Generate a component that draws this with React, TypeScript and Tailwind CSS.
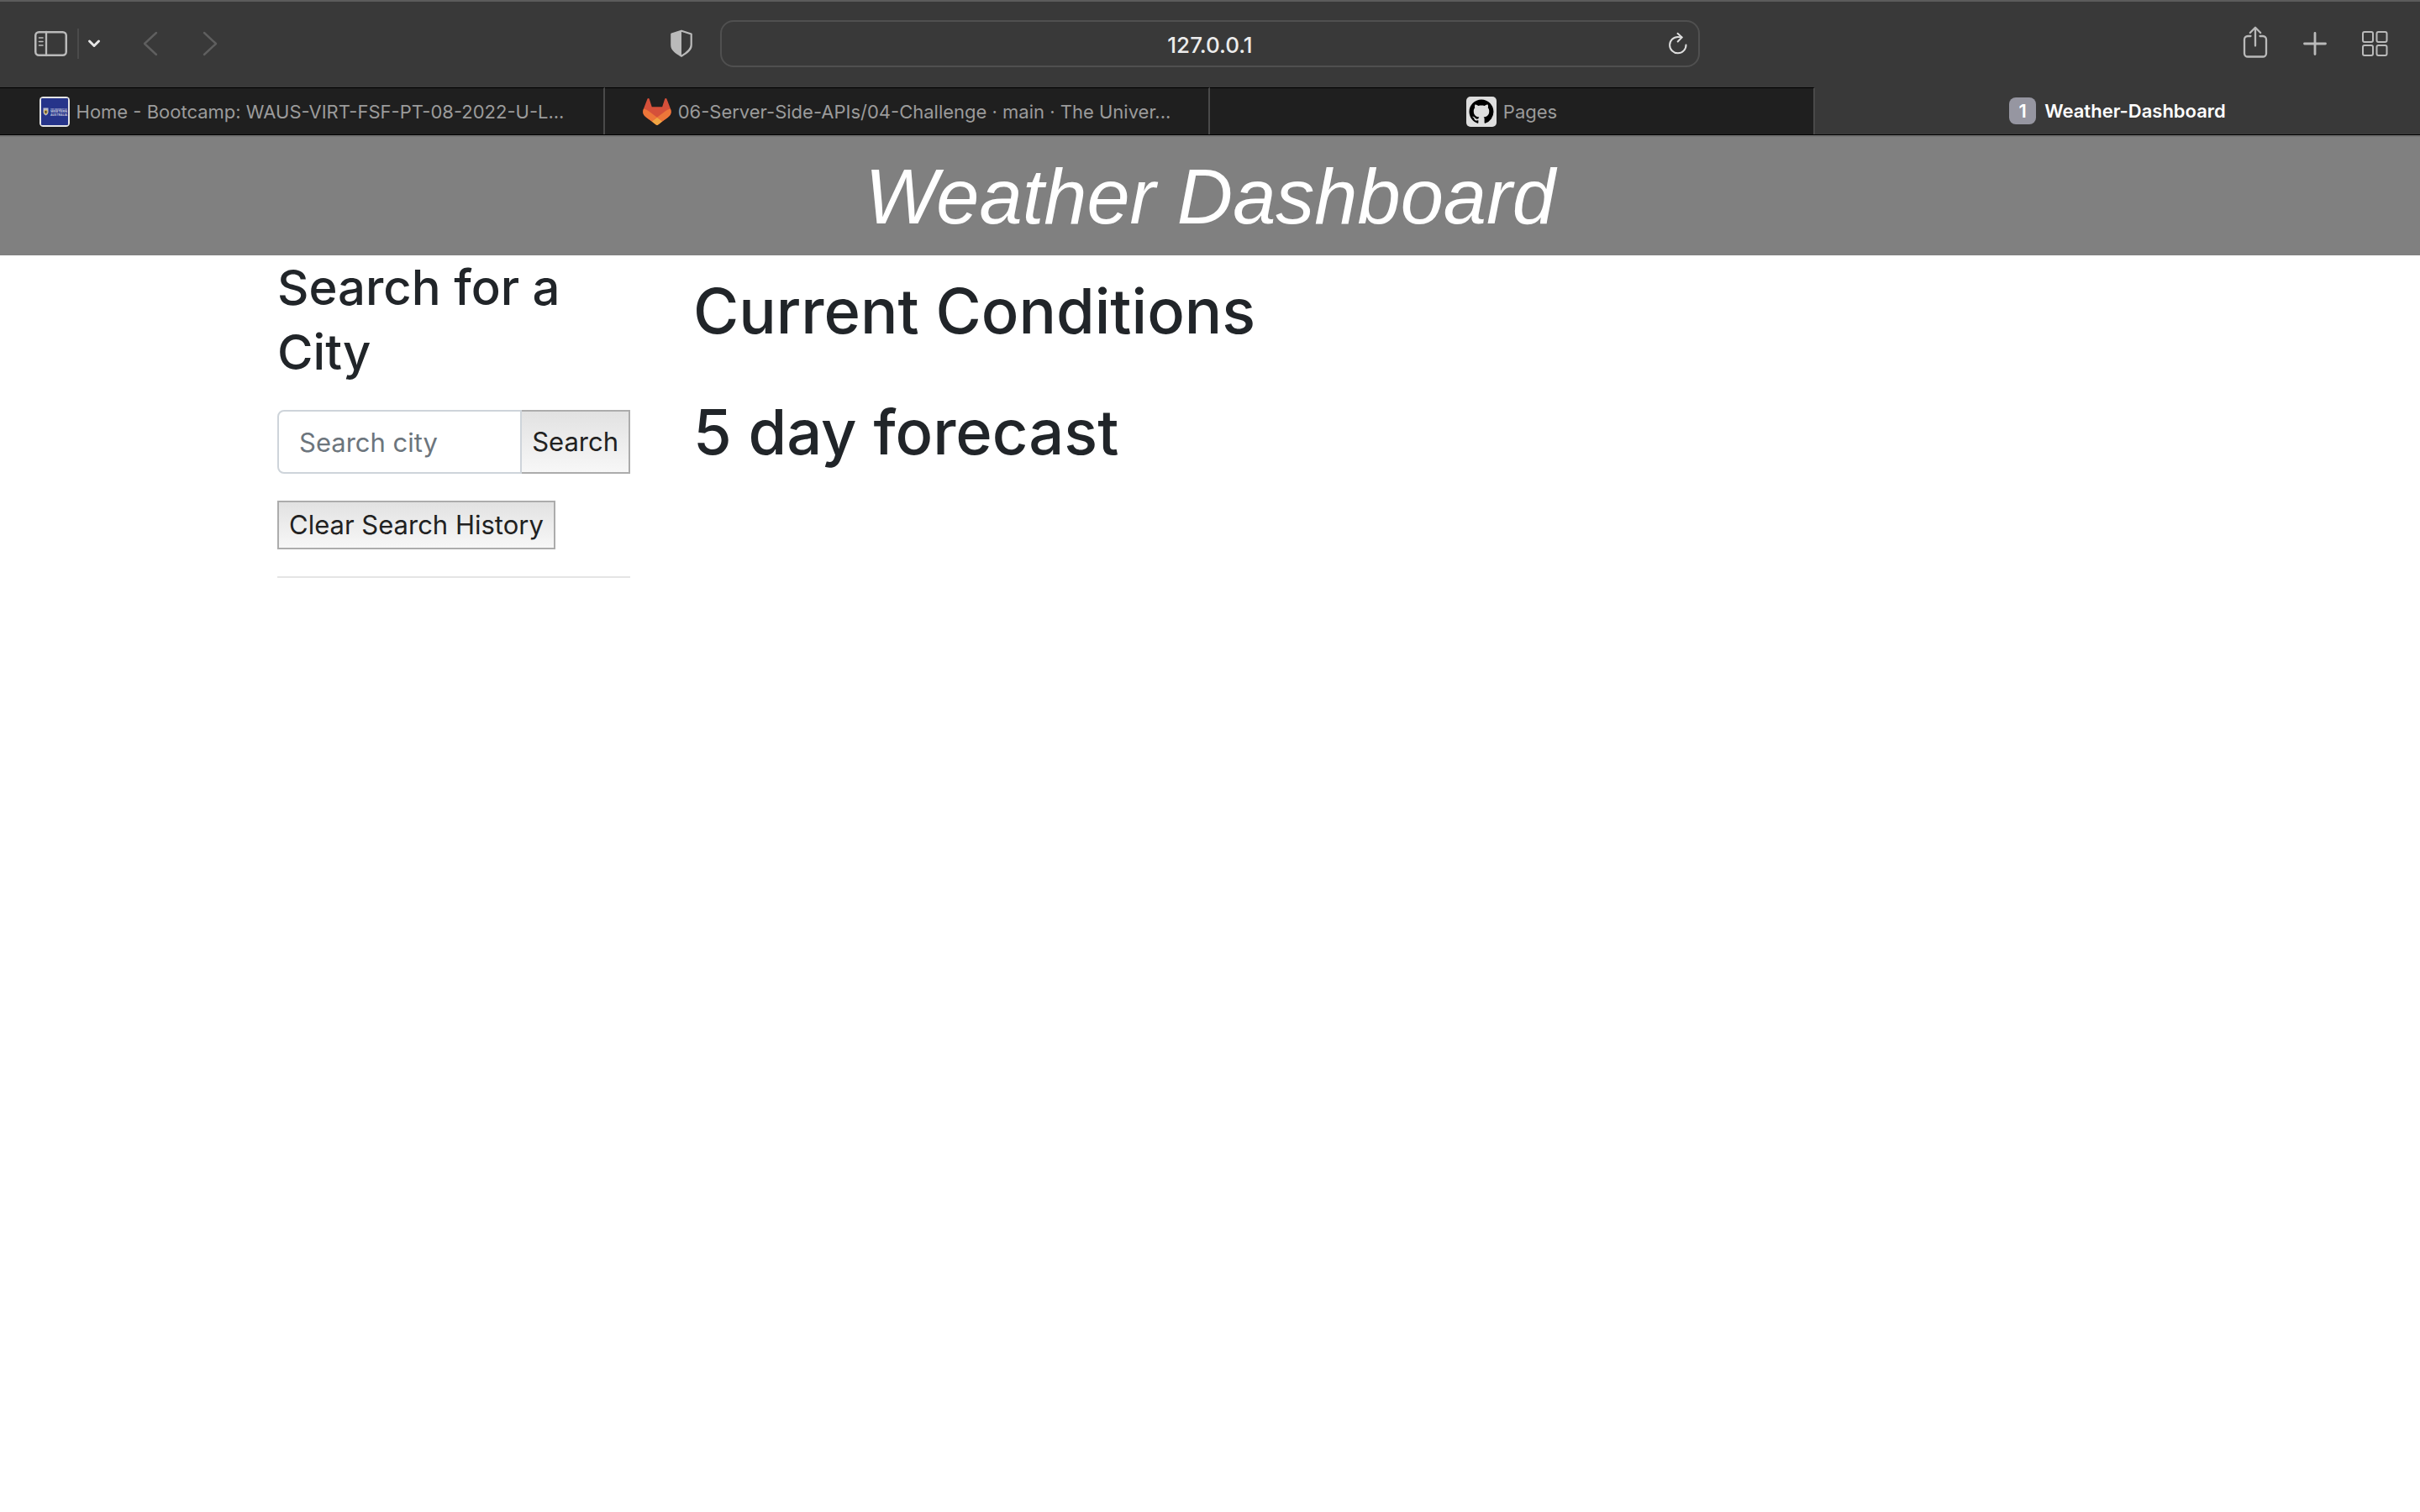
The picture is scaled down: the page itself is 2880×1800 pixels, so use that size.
import type { ReactNode } from "react";

const gradientButton =
  "border-2 border-[#acacac] bg-linear-to-b from-[#e2e2e2] to-[#f7f7f7] px-3 text-[31px] leading-[54px] text-[#212121]";

const sectionHeading = "text-[74px] leading-24 font-medium";

function SidebarIcon() {
  return (
    <svg width="40" height="32" viewBox="0 0 40 32" fill="none" stroke="#bababa" strokeLinecap="round">
      <rect x="2.25" y="2.25" width="36.5" height="27.5" rx="4" strokeWidth="2.5" />
      <path d="M15 2v28" strokeWidth="2.3" />
      <path d="M6.5 9h4.5M6.5 13.5h4.5M6.5 18h4.5" strokeWidth="1.6" />
    </svg>
  );
}

function SmallChevronIcon() {
  return (
    <svg width="16" height="12" viewBox="0 0 16 12" fill="none" stroke="#e6e6e6" strokeWidth="3" strokeLinecap="round" strokeLinejoin="round">
      <path d="M2.5 3 8 8.5 13.500 3" />
    </svg>
  );
}

function ArrowIcon({ forward = false }: { forward?: boolean }) {
  return (
    <svg width="18" height="30" viewBox="0 0 18 30" fill="none" stroke="#5f5f5f" strokeWidth="2.4" strokeLinecap="round" strokeLinejoin="round">
      <path d={forward ? "M2 2l14 13L2 28" : "M16 2 2 15l14 13"} />
    </svg>
  );
}

function ShieldIcon() {
  return (
    <svg width="28" height="34" viewBox="0 0 28 34">
      <path
        d="M14 1.700 25.700 5.500v13c0 5.500-4.500 9-11.700 13.200C6.800 27.500 2.300 24 2.300 18.500v-13z"
        fill="none"
        stroke="#bababa"
        strokeWidth="2.200"
        strokeLinejoin="round"
      />
      <path d="M14 1.500 2.300 5.500v13c0 5.500 4.500 9 11.700 13.200z" fill="#bababa" />
    </svg>
  );
}

function ReloadIcon() {
  return (
    <svg width="24" height="28" viewBox="0 0 24 28" fill="none" stroke="#dedede" strokeWidth="2" strokeLinecap="round" strokeLinejoin="round">
      <path d="M21.500 15.500A9.700 9.700 0 1 1 11.800 5.900c1.500 0 3 .1 4.700.500" />
      <path d="M11.500 1.800 16.700 6.400 11.700 11.500" />
    </svg>
  );
}

function ShareIcon() {
  return (
    <svg width="30" height="38" viewBox="0 0 30 38" fill="none" stroke="#bababa" strokeWidth="2.300" strokeLinecap="round" strokeLinejoin="round">
      <path d="M9.500 12H6a4 4 0 0 0-4 4v16.500a4 4 0 0 0 4 4h18a4 4 0 0 0 4-4V16a4 4 0 0 0-4-4h-3.500" />
      <path d="M15 23.500V2M8.800 8 15 1.800 21.200 8" />
    </svg>
  );
}

function PlusIcon() {
  return (
    <svg width="28" height="28" viewBox="0 0 28 28" stroke="#bababa" strokeWidth="2.800" strokeLinecap="round">
      <path d="M14 1.500v25M1.500 14h25" />
    </svg>
  );
}

function GridIcon() {
  return (
    <svg width="31" height="30" viewBox="0 0 31 30" fill="none" stroke="#bababa" strokeWidth="2">
      <rect x="1" y="1" width="12" height="12" rx="2" />
      <rect x="17.500" y="1" width="12" height="12" rx="2" />
      <rect x="1" y="17" width="12" height="12" rx="2" />
      <rect x="17.500" y="17" width="12" height="12" rx="2" />
    </svg>
  );
}

function UniversityFavicon() {
  return (
    <svg width="36" height="36" viewBox="0 0 36 36" className="shrink-0">
      <rect width="36" height="36" rx="4.500" fill="#e4e4e4" />
      <rect x="2" y="2" width="32" height="32" rx="1" fill="#26348a" />
      <path d="M4.500 13.500h6v5c0 2-1.500 3-3 4-1.500-1-3-2-3-4z" fill="#b9bccb" />
      <path d="M5.500 17 7.500 15.500 9.500 17v2L7.500 21.200 5.500 19z" fill="#caa33a" />
      <path d="M6.800 17.200h1.500v2.200H6.800z" fill="#1d2340" />
      <g fill="#c3c6dc" fontFamily="Inter, sans-serif" fontWeight="700">
        <text x="13" y="15.500" fontSize="2">THE UNIVERSITY OF</text>
        <text x="13" y="19.200" fontSize="4">WESTERN</text>
        <text x="13" y="22.800" fontSize="3.500">AUSTRALIA</text>
      </g>
    </svg>
  );
}

function GitlabFavicon() {
  return (
    <svg width="34" height="32" viewBox="0 0 25 24" className="shrink-0">
      <path
        fill="#d5503a"
        d="M24.507 9.500l-.034-.09L21.082.562a.896.896 0 0 0-1.694.091l-2.290 7.010H7.825L5.535.653a.898.898 0 0 0-1.694-.090L.451 9.411.416 9.500a6.297 6.297 0 0 0 2.090 7.278l.012.010.030.022 5.160 3.867 2.560 1.935 1.554 1.176a1.051 1.051 0 0 0 1.268 0l1.555-1.176 2.560-1.935 5.197-3.890.014-.010A6.297 6.297 0 0 0 24.507 9.500z"
      />
      <path
        fill="#ed7639"
        d="M24.507 9.500l-.034-.090a11.440 11.440 0 0 0-4.560 2.051l-7.447 5.632 4.742 3.584 5.197-3.890.014-.010A6.297 6.297 0 0 0 24.507 9.500z"
      />
      <path
        fill="#f0a542"
        d="M7.707 20.677l2.560 1.935 1.555 1.176a1.051 1.051 0 0 0 1.268 0l1.555-1.176 2.560-1.935-4.743-3.584-4.755 3.584z"
      />
      <path
        fill="#ed7639"
        d="M5.010 11.461a11.430 11.430 0 0 0-4.560-2.050L.416 9.500a6.297 6.297 0 0 0 2.090 7.278l.012.010.030.022 5.160 3.867 4.745-3.584-7.444-5.632z"
      />
    </svg>
  );
}

function GithubFavicon() {
  return (
    <svg width="36" height="36" viewBox="0 0 36 36" className="shrink-0">
      <rect width="36" height="36" rx="5" fill="#dedede" />
      <g transform="translate(3.500 3.500) scale(1.810)">
        <path
          fill="#000"
          d="M8 0C3.580 0 0 3.580 0 8c0 3.540 2.290 6.530 5.470 7.590.4.070.55-.17.55-.38 0-.19-.010-.82-.010-1.490-2.010.37-2.530-.49-2.690-.94-.090-.23-.48-.94-.82-1.130-.28-.15-.68-.52-.010-.53.63-.010 1.080.58 1.230.82.72 1.210 1.870.87 2.330.66.070-.52.28-.87.51-1.070-1.780-.2-3.640-.89-3.640-3.950 0-.87.31-1.590.82-2.150-.080-.2-.36-1.020.080-2.120 0 0 .67-.21 2.200.82.64-.18 1.320-.27 2-.27s1.360.090 2 .27c1.530-1.040 2.200-.82 2.200-.82.44 1.100.16 1.920.080 2.120.51.56.82 1.270.82 2.150 0 3.070-1.870 3.750-3.650 3.950.29.25.54.73.54 1.480 0 1.070-.010 1.930-.010 2.200 0 .21.15.46.55.38A8.010 8.010 0 0 0 16 8c0-4.420-3.580-8-8-8z"
        />
      </g>
    </svg>
  );
}

function Tab({ icon, title, active = false }: { icon: ReactNode; title: string; active?: boolean }) {
  return (
    <button
      type="button"
      role="tab"
      aria-selected={active}
      className={
        active
          ? "flex min-w-0 items-center justify-center gap-2.5 bg-[#393939] px-9 font-semibold text-white"
          : "flex min-w-0 items-center justify-center gap-2 border-t border-r-2 border-t-black border-r-[#4a4a4a] bg-[#1f1f1f] px-9 text-[#9b9b9b]"
      }
    >
      {icon}
      <span className="truncate">{title}</span>
    </button>
  );
}

function BrowserChrome() {
  return (
    <div className="border-t-2 border-[#5c5c5c] bg-[#393939]">
      <div className="grid h-[102px] grid-cols-[1fr_40.5%_1fr] items-center pb-0.5">
        <div className="flex items-center pr-8 pl-10">
          <button type="button" aria-label="Show sidebar">
            <SidebarIcon />
          </button>
          <div className="mr-2.5 ml-3 h-9 w-0.5 bg-[#4b4b4b]" />
          <button type="button" aria-label="Tab groups">
            <SmallChevronIcon />
          </button>
          <button type="button" aria-label="Back" className="ml-[50px]">
            <ArrowIcon />
          </button>
          <button type="button" aria-label="Forward" className="ml-[53px]">
            <ArrowIcon forward />
          </button>
          <button type="button" aria-label="Privacy report" className="ml-auto">
            <ShieldIcon />
          </button>
        </div>
        <div className="flex h-14 items-center rounded-2xl border-2 border-[#505050] pr-3 pl-9">
          <input
            type="text"
            aria-label="Address"
            defaultValue="127.0.0.1"
            className="min-w-0 flex-1 bg-transparent pt-0.5 text-center text-[26px] font-medium text-[#ececec] outline-none"
          />
          <button type="button" aria-label="Reload">
            <ReloadIcon />
          </button>
        </div>
        <div className="flex items-center justify-end pr-[38px]">
          <button type="button" aria-label="Share" className="mr-[42px] pb-1">
            <ShareIcon />
          </button>
          <button type="button" aria-label="New tab" className="mr-[42px]">
            <PlusIcon />
          </button>
          <button type="button" aria-label="Tab overview">
            <GridIcon />
          </button>
        </div>
      </div>
      <div role="tablist" className="grid h-[57px] grid-cols-4 border-b border-black text-[22px] leading-7">
        <Tab icon={<UniversityFavicon />} title="Home - Bootcamp: WAUS-VIRT-FSF-PT-08-2022-U-L..." />
        <Tab icon={<GitlabFavicon />} title="06-Server-Side-APIs/04-Challenge · main · The Univer..." />
        <Tab icon={<GithubFavicon />} title="Pages" />
        <Tab
          active
          title="Weather-Dashboard"
          icon={
            <span className="flex size-8 shrink-0 items-center justify-center rounded-lg bg-[#9696a1] font-semibold">1</span>
          }
        />
      </div>
    </div>
  );
}

export default function App() {
  return (
    <div className="min-h-screen bg-white font-['Inter',sans-serif] text-[#212529]">
      <BrowserChrome />
      <header className="border-t-2 border-[#737373] bg-[#808080] pt-3.5 pb-3 text-center">
        <h1 className="font-['Liberation_Sans',sans-serif] text-[92px] leading-[115px] text-white italic">
          Weather Dashboard
        </h1>
      </header>
      <div className="mx-auto flex max-w-[2280px] gap-[75px] px-[30px]">
        <aside className="w-[420px] shrink-0">
          <h2 className="mb-[30px] text-[58px] leading-[77px] font-medium">Search for a City</h2>
          <form className="mb-8 flex" onSubmit={(event) => event.preventDefault()}>
            <input
              type="text"
              aria-label="Search city"
              placeholder="Search city"
              className="h-[76px] min-w-0 flex-1 rounded-l-lg border-2 border-[#ced4da] px-6 text-[31px] placeholder:text-[#6c757d]"
            />
            <button type="submit" className={`${gradientButton} border-l-0`}>
              Search
            </button>
          </form>
          <button type="button" className={gradientButton}>
            Clear Search History
          </button>
          <hr className="mt-8 border-t-2 border-[#e5e5e5]" />
        </aside>
        <main className="flex min-w-0 flex-1 flex-col gap-12 pt-[18px]">
          <h2 className={sectionHeading}>Current Conditions</h2>
          <h2 className={sectionHeading}>5 day forecast</h2>
        </main>
      </div>
    </div>
  );
}
